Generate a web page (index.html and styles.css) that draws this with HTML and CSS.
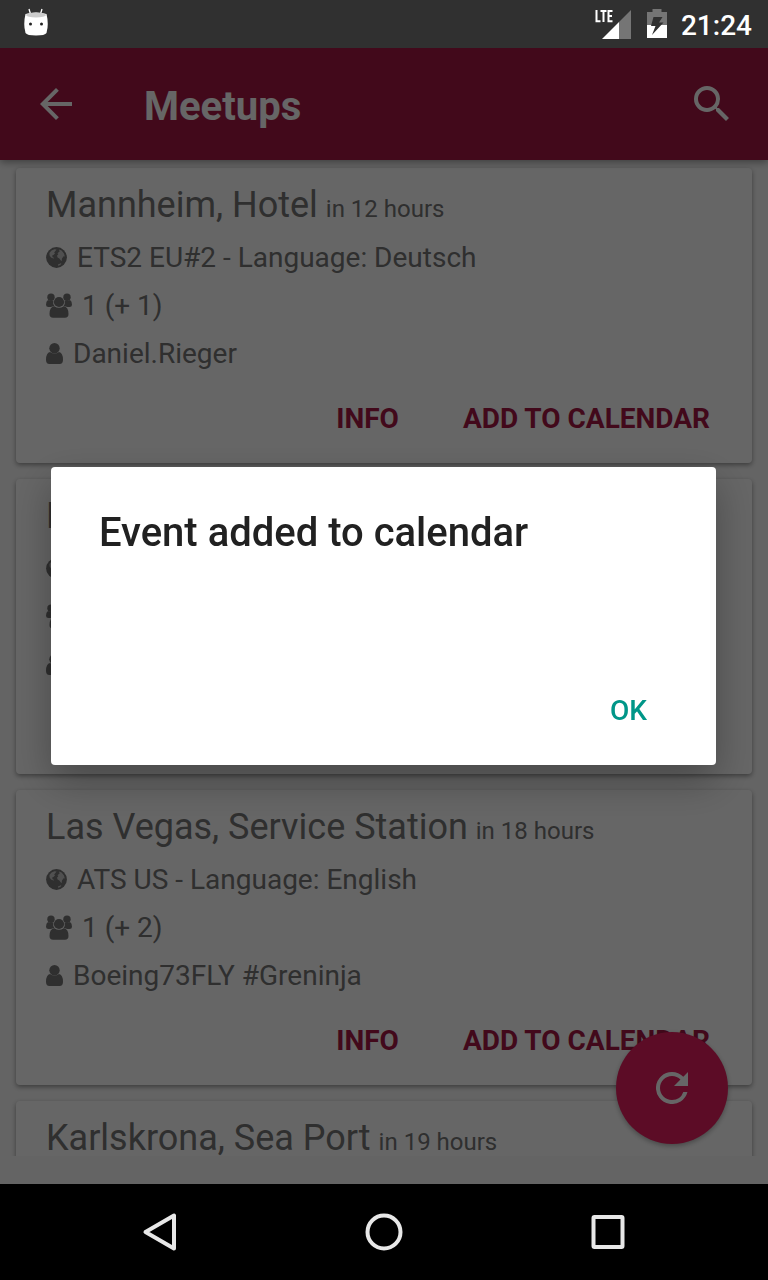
FILE: index.html
```html
<!DOCTYPE html>
<html lang="en">
<head>
<meta charset="utf-8">
<meta name="viewport" content="width=device-width, initial-scale=1">
<title>Meetups</title>
<link rel="stylesheet" href="styles.css">
</head>
<body>
<svg class="symbols" aria-hidden="true">
  <symbol id="globe" viewBox="0 0 21 21">
    <circle cx="10.5" cy="10.5" r="10.4" fill="currentColor"/>
    <path class="land" d="M5.500 3.600 8.500 2.200 10.600 2.600 9.400 4 8.200 5.600 9 6.600 7.400 8 6.200 8.600 6.600 10.200 8.400 11 7.400 11.600 5 10.400 3.600 8.400 3.400 6zM13 2.400 15.600 3.600 18 6.400 18.800 9.600 17.600 9.200 16 11.600 15.600 14.200 14.200 12.800 13.400 11.400 11.600 10.600 11 8.800 12.400 7 11.400 6.200 13.600 4.600zM12 17.400 15.400 16 14.400 18 12 18.800z"/>
  </symbol>
  <symbol id="users" viewBox="0 0 26 25">
    <g fill="currentColor">
      <circle cx="5" cy="4.200" r="3.700"/><circle cx="21" cy="4.200" r="3.700"/>
      <path d="M2 7q3 1.600 5.400.6Q6.600 11.200 8.600 13.200 6 13.300 4.800 14H2.500Q0 14 0 11.700 0 8 2 7zM24 7q-3 1.600-5.400.6.800 3.600-1.200 5.600 2.600.1 3.800.8h2.300Q26 14 26 11.700 26 8 24 7z"/>
      <circle cx="13" cy="9" r="5.100"/>
      <path d="M8.300 13.200q4.700 3 9.400 0 4.800.6 4.800 7.800 0 3.800-3.600 3.800H7.100q-3.600 0-3.600-3.800 0-7.200 4.800-7.800z"/>
    </g>
  </symbol>
  <symbol id="user" viewBox="0 0 17 21">
    <g fill="currentColor">
      <circle cx="8.500" cy="5.200" r="5.200"/>
      <path d="M4 9q4.500 3.200 9 0 4 1 4 7.700 0 4.200-3.400 4.200H3.400Q0 20.900 0 16.700 0 10 4 9z"/>
    </g>
  </symbol>
</svg>

<div class="screen">
  <header class="status">
    <svg class="bot" viewBox="0 0 26 28" width="26" height="28" aria-hidden="true">
      <path d="M6 1 7.500 6M19 1 17.500 6" stroke="#fff" stroke-width="1.300"/>
      <path d="M2.500 6Q13 3 23.500 6 26 16 23.500 25 22 27.500 13 27.500T2.500 25Q0 16 2.500 6z" fill="#fff"/>
      <ellipse cx="13" cy="7" rx="10" ry="2.500" fill="#ccc"/>
      <circle cx="7.500" cy="16" r="1.500" fill="#222"/><circle cx="18.500" cy="16" r="1.500" fill="#222"/>
    </svg>
    <div class="indicators">
      <svg viewBox="0 0 36 30" width="36" height="30" aria-label="LTE signal" role="img">
        <path d="M36 1V30H24V13z" fill="#757575"/>
        <path d="M24 13V30H7z" fill="#fff"/>
        <path d="M1.500 1V12.200H5.500M5.500 2H11.500M8.500 2V13M17.500 2H13.500V12.200H17.500M13.500 7H17" fill="none" stroke="#fff" stroke-width="2"/>
      </svg>
      <svg viewBox="0 0 20 30" width="20" height="30" aria-label="Charging" role="img">
        <path d="M5.500 0H14.500V3H20V16H0V3H5.500z" fill="#757575"/>
        <path d="M0 16H20V29H0z" fill="#fff"/>
        <path d="M6.500 8H15.500L12 13.500H16.500L5 26 8.500 17H4z" fill="#303030"/>
      </svg>
      <time>21:24</time>
    </div>
  </header>

  <div class="toolbar">
    <button class="icon-button" aria-label="Back">
      <svg viewBox="4 4 16 16" width="32" height="32"><path fill="currentColor" d="M20 11H7.830l5.590-5.590L12 4l-8 8 8 8 1.410-1.410L7.830 13H20z"/></svg>
    </button>
    <h1>Meetups</h1>
    <button class="icon-button" aria-label="Search">
      <svg viewBox="3 3 18 18" width="36" height="36"><path fill="currentColor" d="M15.500 14h-.79l-.28-.27A6.470 6.470 0 0 0 16 9.500 6.500 6.500 0 1 0 9.500 16c1.610 0 3.090-.59 4.230-1.570l.27.28v.79l5 4.990L20.490 19zm-6 0C7.010 14 5 11.990 5 9.500S7.010 5 9.500 5 14 7.010 14 9.500 11.990 14 9.500 14z"/></svg>
    </button>
  </div>

  <main class="content">
    <div class="list">
      <article class="card">
        <h2>Mannheim, Hotel <small>in 12 hours</small></h2>
        <p><svg width="21" height="21"><use href="#globe"/></svg>ETS2 EU#2 - Language: Deutsch</p>
        <p><svg width="26" height="25"><use href="#users"/></svg>1 (+ 1)</p>
        <p><svg width="17" height="21"><use href="#user"/></svg>Daniel.Rieger</p>
        <div class="actions"><button>INFO</button><button>ADD TO CALENDAR</button></div>
      </article>
      <article class="card">
        <h2>Hotel</h2>
        <p><svg width="21" height="21"><use href="#globe"/></svg></p>
        <p><svg width="26" height="25"><use href="#users"/></svg></p>
        <p><svg width="17" height="21"><use href="#user"/></svg></p>
        <div class="actions"><button>INFO</button><button>ADD TO CALENDAR</button></div>
      </article>
      <article class="card">
        <h2>Las Vegas, Service Station <small>in 18 hours</small></h2>
        <p><svg width="21" height="21"><use href="#globe"/></svg>ATS US - Language: English</p>
        <p><svg width="26" height="25"><use href="#users"/></svg>1 (+ 2)</p>
        <p><svg width="17" height="21"><use href="#user"/></svg>Boeing73FLY #Greninja</p>
        <div class="actions"><button>INFO</button><button>ADD TO CALENDAR</button></div>
      </article>
      <article class="card">
        <h2>Karlskrona, Sea Port <small>in 19 hours</small></h2>
      </article>
    </div>
    <button class="fab" aria-label="Refresh">
      <svg viewBox="4 4 16 16" width="32" height="32"><path fill="currentColor" d="M17.650 6.350A7.958 7.958 0 0 0 12 4a8 8 0 1 0 7.730 10h-2.080A5.990 5.990 0 0 1 12 18c-3.310 0-6-2.690-6-6s2.690-6 6-6c1.660 0 3.140.69 4.220 1.780L13 11h7V4z"/></svg>
    </button>
  </main>

  <nav class="navbar">
    <button aria-label="Back"><svg viewBox="0 0 40 40" width="40" height="40"><path d="M34 3.500V36.500L5.500 20z"/></svg></button>
    <button aria-label="Home"><svg viewBox="0 0 40 40" width="40" height="40"><circle cx="20" cy="20" r="16.500"/></svg></button>
    <button aria-label="Recent apps"><svg viewBox="0 0 40 40" width="40" height="40"><rect x="5.500" y="5" width="29" height="30" rx="1"/></svg></button>
  </nav>
</div>

<div class="scrim">
  <section class="dialog" role="alertdialog" aria-modal="true" aria-labelledby="dialog-title">
    <h2 id="dialog-title">Event added to calendar</h2>
    <div class="dialog-actions"><button>OK</button></div>
  </section>
</div>
</body>
</html>
```
FILE: styles.css
```css
* { box-sizing: border-box; }
body { margin: 0; font-family: Roboto, "Liberation Sans", sans-serif; }
h1, h2, p { margin: 0; }
button { border: 0; padding: 0; background: none; font-family: inherit; color: inherit; cursor: pointer; }
svg { display: block; flex: none; }
.symbols { position: absolute; width: 0; height: 0; }

.screen { display: flex; flex-direction: column; height: 100vh; overflow: hidden; }

.status {
  flex: none; height: 48px; padding: 0 16px 0 23px; z-index: 2;
  display: flex; align-items: center; justify-content: space-between;
  background: #303030; color: #fff;
}
.bot { margin-bottom: 4px; }
.indicators { display: flex; align-items: center; gap: 16px; }
.indicators time { padding-top: 3px; font-size: 28px; line-height: 45px; font-weight: 500; margin-left: -2px; }

.toolbar {
  flex: none; height: 112px; padding: 0 38px 0 40px; z-index: 1;
  display: flex; align-items: center;
  background: #a51744; color: #fff;
  box-shadow: 0 2px 8px rgba(0, 0, 0, .4);
}
.toolbar h1 { flex: 1; margin-left: 72px; padding-top: 6px; font-size: 40px; line-height: 48px; font-weight: 700; }

.content { flex: 1; min-height: 0; position: relative; background: #fafafa; padding-bottom: 28px; }
.list {
  height: 100%; overflow: hidden; padding: 8px 16px 0;
  display: flex; flex-direction: column; gap: 16px;
}
.card {
  flex: none; padding: 13px 10px 20px 30px; border-radius: 4px;
  background: #fff; color: #757575;
  box-shadow: 0 2px 5px rgba(0, 0, 0, .4);
}
.card h2 { font-size: 36px; line-height: 48px; font-weight: 400; margin-bottom: 5px; white-space: nowrap; }
.card small { font-size: 24px; line-height: 24px; margin-left: -1px; }
.card p { display: flex; align-items: center; gap: 10px; height: 48px; font-size: 28px; line-height: 48px; }
.card p svg { margin-bottom: 2px; }
.land { fill: #fff; opacity: .6; }
.actions { display: flex; justify-content: flex-end; margin-top: 17px; }
.actions button { padding: 0 32px; font-size: 28px; line-height: 48px; font-weight: 700; color: #a51744; }

.fab {
  position: absolute; right: 40px; bottom: 40px; width: 112px; height: 112px;
  display: flex; align-items: center; justify-content: center;
  border-radius: 50%; background: #e61e5f; color: #fff;
  box-shadow: 0 2px 5px rgba(0, 0, 0, .3);
}

.navbar {
  flex: none; height: 96px; padding: 0 48px;
  display: flex; background: #000;
}
.navbar button { flex: 1; display: flex; align-items: center; justify-content: center; }
.navbar svg { fill: none; stroke: #e8e8e8; stroke-width: 4; stroke-linejoin: round; }

.scrim {
  position: fixed; inset: 48px 0 96px; z-index: 2; padding: 0 52px 0 51px;
  display: flex; align-items: center;
  background: rgba(0, 0, 0, .6);
}
.dialog {
  flex: 1; padding: 40px 48px 30px; border-radius: 4px;
  background: #fff; color: #212121;
  box-shadow: 0 16px 40px rgba(0, 0, 0, .3);
}
.dialog h2 { font-size: 40px; line-height: 52px; font-weight: 500; }
.dialog-actions { display: flex; justify-content: flex-end; margin-top: 128px; padding-right: 21px; }
.dialog-actions button { font-size: 28px; line-height: 48px; font-weight: 500; color: #009688; }
```
